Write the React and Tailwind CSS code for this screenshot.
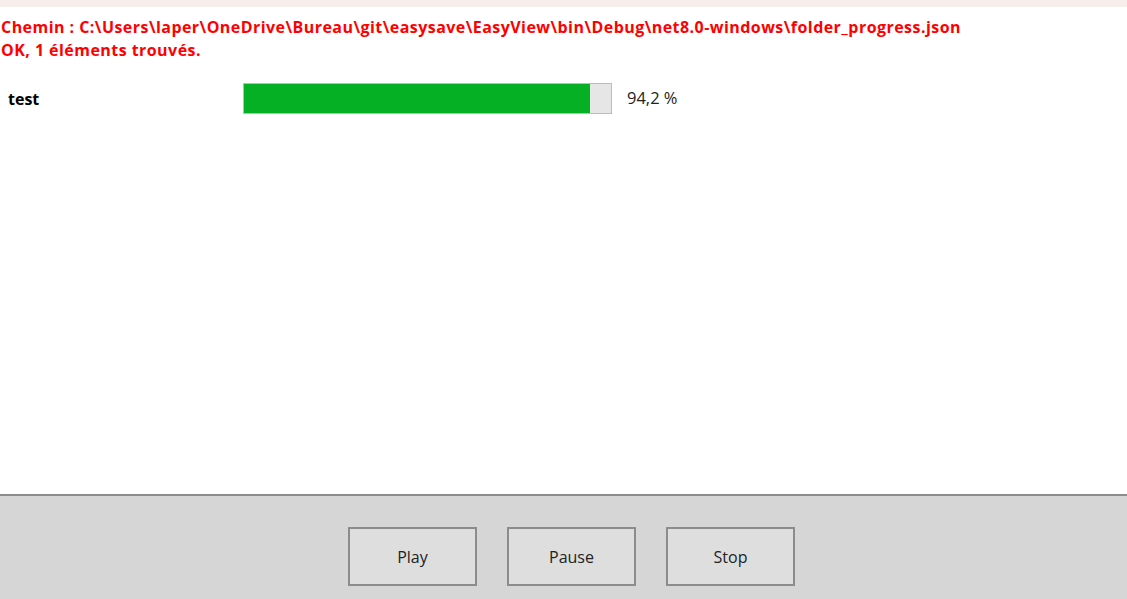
export default function App() {
  const pct = 94.2;
  return (
    <div className="w-[1127px] h-[599px] flex flex-col bg-white overflow-hidden" style={{ fontFamily: '"Open Sans", "Noto Sans", sans-serif' }}>
      <div className="h-[7px] bg-[#f7eeec]" />
      <div className="flex-1 flex flex-col">
        <div className="pt-[9px] pl-[1px] text-[#ff0000] font-bold text-[16px] leading-[23px] tracking-[0.45px]">
          <div>Chemin : C:\Users\laper\OneDrive\Bureau\git\easysave\EasyView\bin\Debug\net8.0-windows\folder_progress.json</div>
          <div>OK, 1 éléments trouvés.</div>
        </div>
        <div className="mt-[21px] flex items-center h-[31px]">
          <div className="w-[243px] pl-[8px] font-bold text-[16px] text-black">test</div>
          <div className="w-[369px] h-[31px] bg-[#e6e6e6] border border-[#bcbcbc] flex">
            <div className="h-full bg-[#06b025]" style={{ width: `${pct}%` }} />
          </div>
          <div className="pl-[15px] text-[16.5px] text-[#222]">94,2 %</div>
        </div>
      </div>
      <div className="h-[105px] bg-[#d6d6d6] border-t-2 border-[#8c8c8c] flex justify-center gap-[30px] pt-[31px] pl-[16px]">
        {['Play', 'Pause', 'Stop'].map((l) => (
          <button key={l} className="w-[129px] h-[59px] bg-[#dedede] border-2 border-[#8c8c8c] text-[16px] text-[#222]">{l}</button>
        ))}
      </div>
    </div>
  );
}
